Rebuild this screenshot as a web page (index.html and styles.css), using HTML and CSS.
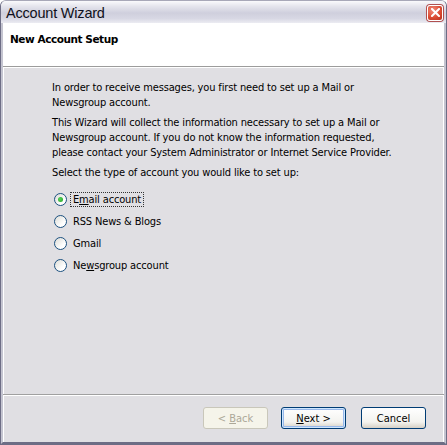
FILE: index.html
```html
<!DOCTYPE html>
<html>
<head>
<meta charset="utf-8">
<link rel="stylesheet" href="styles.css">
</head>
<body>
<div class="window">
  <div class="titlebar">
    <span class="title">Account Wizard</span>
    <span class="close"><svg width="9" height="9" viewBox="0 0 9 9"><path d="M1 1 L8 8 M8 1 L1 8" stroke="#fff" stroke-width="2" stroke-linecap="square"/></svg></span>
  </div>
  <div class="frame">
    <div class="header">New Account Setup</div>
    <div class="content">
      <p>In order to receive messages, you first need to set up a Mail or<br>Newsgroup account.</p>
      <p>This Wizard will collect the information necessary to set up a Mail or<br>Newsgroup account. If you do not know the information requested,<br>please contact your System Administrator or Internet Service Provider.</p>
      <p>Select the type of account you would like to set up:</p>
      <div class="options">
        <div class="opt"><span class="radio checked"></span><span class="label focus">E<u>m</u>ail account</span></div>
        <div class="opt"><span class="radio"></span><span class="label">RSS News &amp; Blogs</span></div>
        <div class="opt"><span class="radio"></span><span class="label">Gmail</span></div>
        <div class="opt"><span class="radio"></span><span class="label">Ne<u>w</u>sgroup account</span></div>
      </div>
    </div>
    <div class="footer">
      <button class="btn disabled">&lt; <u>B</u>ack</button>
      <button class="btn default"><u>N</u>ext &gt;</button>
      <button class="btn cancel">Cancel</button>
    </div>
  </div>
</div>
</body>
</html>
```
FILE: styles.css
```css
html, body { margin: 0; padding: 0; }
body { width: 447px; height: 445px; overflow: hidden; background: #fff; font-family: Tahoma, "DejaVu Sans", sans-serif; }
.window {
  box-sizing: border-box;
  width: 447px; height: 445px;
  border: 1px solid #6d6d85;
  border-top-color: #a8a8b8;
  background: #e0dfe3;
  display: flex; flex-direction: column;
  border-radius: 6px 6px 0 0;
  overflow: hidden;
}
.titlebar {
  height: 21px;
  display: flex; align-items: center; justify-content: space-between;
  padding: 1px 3px 0 5px;
  background: linear-gradient(#fafafc 0%, #e4e4ec 25%, #cfcfdd 55%, #d8d8e4 80%, #ececf2 100%);
  flex: none;
}
.title { font-family: "Liberation Sans", sans-serif; font-size: 14.5px; color: #101020; letter-spacing: -0.2px; }
.close {
  width: 16px; height: 16px; box-sizing: border-box;
  border: 1px solid #fff; border-radius: 3px;
  background: radial-gradient(circle at 35% 30%, #f08c7c, #d9482f 60%, #b43220);
  display: flex; align-items: center; justify-content: center;
  box-shadow: 0 0 0 1px #b05050;
}
.frame {
  flex: 1;
  display: flex; flex-direction: column;
  border-left: 2px solid #c4c4d0;
  border-right: 2px solid #c4c4d0;
  border-bottom: 2px solid #6d6d85;
  box-shadow: inset 1px 0 0 #fff, inset -1px 0 0 #fff;
}
.header {
  height: 44px; box-sizing: border-box;
  background: #fff;
  border-bottom: 1px solid #9c9c9c;
  padding: 10px 0 0 7px;
  font-family: "DejaVu Sans", sans-serif; font-weight: bold; font-size: 10.5px; color: #000;
  letter-spacing: -0.45px;
}
.content {
  flex: 1;
  padding: 12px 0 0 49px;
  font-family: "DejaVu Sans Condensed", "DejaVu Sans", sans-serif;
  font-size: 11px; color: #000;
  letter-spacing: -0.15px;
  border-top: 1px solid #fff;
}
.content p { margin: 0 0 5px; line-height: 15px; }
.options { margin-top: 13px; display: flex; flex-direction: column; gap: 9px; padding-left: 2px; }
.opt { display: flex; align-items: center; height: 13px; }
.radio {
  width: 13px; height: 13px; box-sizing: border-box;
  border: 1px solid #1c5180; border-radius: 50%;
  background: linear-gradient(135deg, #dcdcd6, #ffffff 70%);
  margin-right: 3px; flex: none;
  display: flex; align-items: center; justify-content: center;
}
.radio.checked::after {
  content: ""; width: 5px; height: 5px; border-radius: 50%;
  background: radial-gradient(circle at 40% 40%, #55d35b, #21a121);
}
.label { padding: 0 2px; line-height: 13px; border: 1px dotted transparent; }
.label.focus { border-color: #333; }
.footer {
  height: 48px; box-sizing: border-box;
  border-top: 1px solid #a0a0a0;
  box-shadow: inset 0 1px 0 #fff;
  display: flex; justify-content: flex-end; align-items: flex-start;
  padding: 12px 18px 0 0; gap: 13px;
}
.btn {
  width: 65px; height: 22px;
  font-family: "DejaVu Sans Condensed", "DejaVu Sans", sans-serif; font-size: 11px; color: #000;
  border: 1px solid #003c74; border-radius: 3px;
  background: linear-gradient(#ffffff, #f3f3ef 70%, #d6d0c5);
  padding: 0;
}
.btn.cancel { margin-left: 2px; }
.btn.default { box-shadow: inset 0 0 0 1px #cee7ff, inset 0 0 0 2px #98b8ea; }
.btn.disabled { color: #aca899; border-color: #c9c7ba; background: #f5f4ea; }
```
